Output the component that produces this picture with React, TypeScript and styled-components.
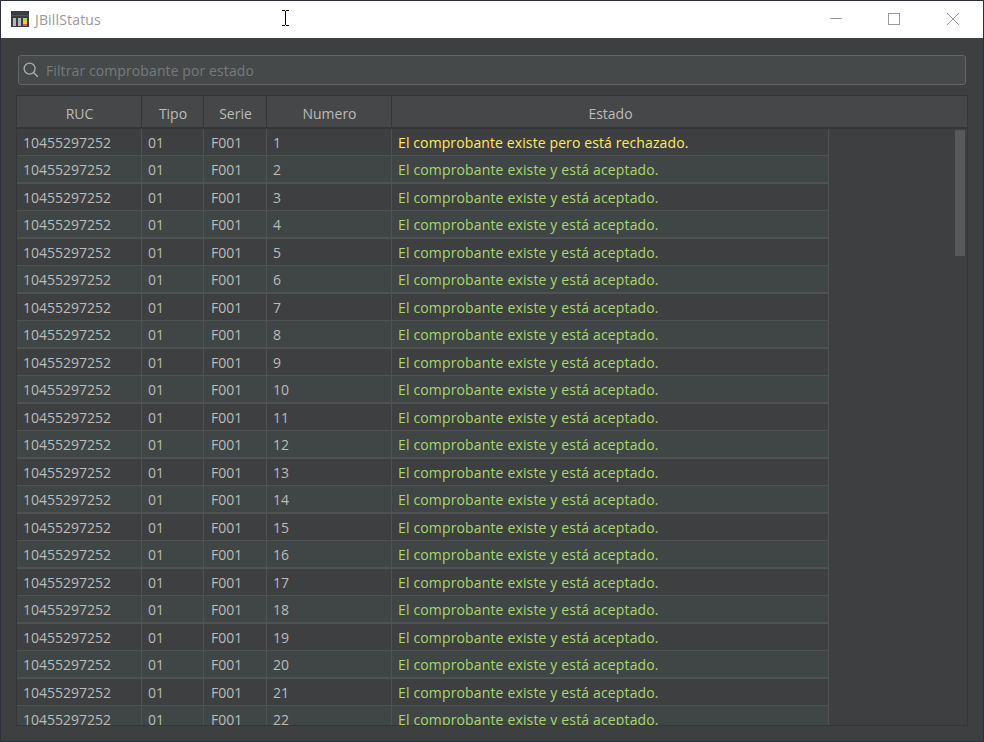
import React from "react";
import styled, { createGlobalStyle } from "styled-components";

const GlobalStyle = createGlobalStyle`
  * { box-sizing: border-box; }
  html, body { margin: 0; padding: 0; overflow: hidden; }
  body { font-family: "Open Sans", "Noto Sans", sans-serif; font-size: 14px; background: #2b2d36; }
`;

const Desktop = styled.div`
  position: relative;
  width: 984px;
  height: 742px;
  padding: 1px;
  background: #2d303a;
`;

const Window = styled.div`
  display: flex;
  flex-direction: column;
  width: 982px;
  height: 740px;
  background: #3e3f41;
`;

const TitleBar = styled.header`
  display: flex;
  align-items: center;
  height: 37px;
  padding-left: 10px;
  background: #ffffff;
`;

const Logo = styled.svg`
  margin-bottom: 1px;
`;

const Title = styled.span`
  flex: 1;
  margin-left: 6px;
  font-size: 14px;
  letter-spacing: 0.16px;
  color: #999999;
`;

const Controls = styled.div`
  display: flex;
  align-items: center;
  gap: 41px;
  padding-right: 22px;
`;

const Content = styled.main`
  display: flex;
  flex-direction: column;
  padding: 17px 15px 0;
`;

const SearchBox = styled.div`
  display: flex;
  align-items: center;
  height: 30px;
  margin: 0 2px 10px;
  padding-left: 4px;
  border: 1px solid #646566;
  border-radius: 3px;
  background: #45494a;
`;

const Placeholder = styled.span`
  margin-left: 7px;
  color: #777a7b;
  letter-spacing: 0.1px;
`;

const TableFrame = styled.section`
  width: 952px;
  height: 631px;
  border: 1px solid #353638;
  overflow: hidden;
`;

const COLUMNS = "125px 62px 63px 125px";

const HeaderRow = styled.div`
  display: grid;
  grid-template-columns: ${COLUMNS} 575px;
  height: 33px;
  border-bottom: 2px solid #353638;
  background: #464749;
`;

const HeaderCell = styled.div`
  line-height: 35px;
  padding-left: 1px;
  text-align: center;
  color: #bbbbbb;
  border-right: 1px solid #353638;
  &:last-child { border-right: 0; padding-right: 139px; }
`;

const Body = styled.div`
  display: flex;
  justify-content: space-between;
  height: 596px;
`;

const Rows = styled.div`
  width: 812px;
`;

const Row = styled.div<{ $striped: boolean }>`
  display: grid;
  grid-template-columns: ${COLUMNS} 437px;
  height: ${(p) => (p.$striped ? 28 : 27)}px;
  border-bottom: ${(p) => (p.$striped ? 2 : 1)}px solid #505153;
  background: ${(p) => (p.$striped ? "#404645" : "#3e3f41")};
`;

const toneColor = { warning: "#ffeb5b", success: "#a9d66f" };
const toneSpacing = { warning: "0.11px", success: "0.15px" };

const Cell = styled.div<{ $tone?: "warning" | "success" }>`
  height: 26px;
  line-height: 28px;
  padding-left: 6px;
  white-space: nowrap;
  border-right: 1px solid #505153;
  letter-spacing: ${(p) => (p.$tone ? toneSpacing[p.$tone] : "0")};
  color: ${(p) => (p.$tone ? toneColor[p.$tone] : "#bbbbbb")};
  &:nth-child(3) { padding-left: 7px; }
`;

const ScrollThumb = styled.div`
  width: 10px;
  height: 126px;
  margin: 1px 2px 0 0;
  background: #58595b;
`;

const Pointer = styled.svg`
  position: absolute;
  left: 282px;
  top: 10px;
`;

const rows = Array.from({ length: 22 }, (_, i) => ({
  ruc: "10455297252",
  tipo: "01",
  serie: "F001",
  numero: i + 1,
  rejected: i === 0,
}));

function AppIcon() {
  return (
    <Logo width="18" height="16" shapeRendering="crispEdges">
      <rect width="18" height="16" fill="#3b3e40" />
      <rect x="1" y="4" width="16" height="1" fill="#55595a" />
      <rect x="2" y="7" width="3" height="8" fill="#b4b8b8" />
      <rect x="7" y="7" width="3" height="8" fill="#b4b8b8" />
      <rect x="12" y="7" width="4" height="3" fill="#b9d35c" />
      <rect x="12" y="10" width="4" height="3" fill="#f5c94a" />
      <rect x="12" y="13" width="4" height="2" fill="#e95a4a" />
    </Logo>
  );
}

export default function App() {
  return (
    <Desktop>
      <GlobalStyle />
      <Window>
        <TitleBar>
          <AppIcon />
          <Title>JBillStatus</Title>
          <Controls>
            <svg width="20" height="15" stroke="#999" fill="none">
              <path d="M3 6.5h12" />
            </svg>
            <svg width="16" height="15" stroke="#999" fill="none">
              <rect x="0.5" y="1.5" width="11" height="11" />
            </svg>
            <svg width="16" height="15" stroke="#999" fill="none">
              <path d="M2 1l12 12M14 1L2 13" />
            </svg>
          </Controls>
        </TitleBar>
        <Content>
          <SearchBox>
            <svg width="16" height="16" fill="none" stroke="#adadad" strokeWidth="1.3">
              <circle cx="6.6" cy="6.6" r="5.5" />
              <path d="M10.5 10.5l4.3 4.3" />
            </svg>
            <Placeholder>Filtrar comprobante por estado</Placeholder>
          </SearchBox>
          <TableFrame>
            <HeaderRow>
              {["RUC", "Tipo", "Serie", "Numero", "Estado"].map((name) => (
                <HeaderCell key={name}>{name}</HeaderCell>
              ))}
            </HeaderRow>
            <Body>
              <Rows>
                {rows.map((r, i) => (
                  <Row key={r.numero} $striped={i % 2 === 1}>
                    <Cell>{r.ruc}</Cell>
                    <Cell>{r.tipo}</Cell>
                    <Cell>{r.serie}</Cell>
                    <Cell>{r.numero}</Cell>
                    <Cell $tone={r.rejected ? "warning" : "success"}>
                      {r.rejected
                        ? "El comprobante existe pero está rechazado."
                        : "El comprobante existe y está aceptado."}
                    </Cell>
                  </Row>
                ))}
              </Rows>
              <ScrollThumb />
            </Body>
          </TableFrame>
        </Content>
      </Window>
      <Pointer width="7" height="17" stroke="#000" fill="none" shapeRendering="crispEdges">
        <path d="M0 .5h3M4 .5h3M3.5 1v14M0 15.5h3M4 15.5h3" />
      </Pointer>
    </Desktop>
  );
}
